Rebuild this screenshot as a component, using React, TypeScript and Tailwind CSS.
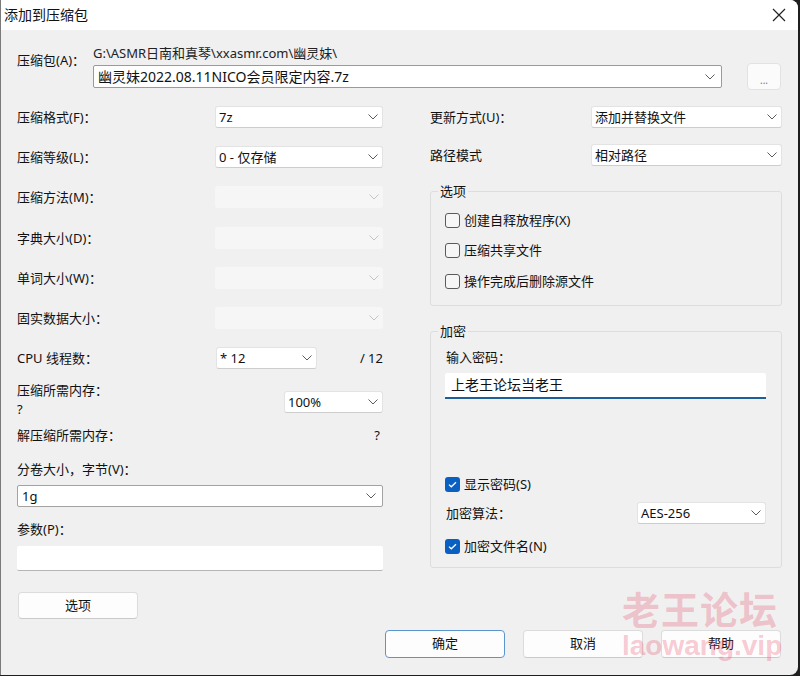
import type { ReactNode } from 'react'

const font = { fontFamily: '"Noto Sans", "Noto Sans CJK SC", sans-serif' }

function Chevron({ light }: { light?: boolean }) {
  return (
    <svg width="10" height="6" viewBox="0 0 10 6" className="shrink-0">
      <path d="M0.5 0.5L5 5L9.5 0.5" fill="none" stroke={light ? '#c4c4c4' : '#5c5c5c'} strokeWidth="1" />
    </svg>
  )
}

function Select({ value, className, disabled }: { value?: string; className: string; disabled?: boolean }) {
  if (disabled) {
    return (
      <div className={`flex h-[22px] items-center justify-end rounded-[3px] bg-[#f6f6f6] pr-[4px] ${className}`}>
        <Chevron light />
      </div>
    )
  }
  return (
    <div
      className={`flex h-[22px] items-center justify-between rounded-[3px] border border-[#e3e3e3] border-b-[#cdcdcd] bg-white pl-[3px] pr-[4px] ${className}`}
    >
      <span className="leading-[16px]">{value}</span>
      <Chevron />
    </div>
  )
}

function Check({ label, checked, className }: { label: string; checked?: boolean; className?: string }) {
  return (
    <div className={`flex h-[16px] items-center gap-[4px] ${className ?? ''}`}>
      {checked ? (
        <span className="flex h-[15px] w-[15px] items-center justify-center rounded-[3px] bg-[#0a5fc2]">
          <svg width="9" height="7" viewBox="0 0 9 7">
            <path d="M1 3.6L3.3 5.8L8 1.2" fill="none" stroke="white" strokeWidth="1.3" />
          </svg>
        </span>
      ) : (
        <span className="h-[15px] w-[15px] rounded-[3px] border border-[#5a5a5a] bg-[#f6f6f6]" />
      )}
      <span className="leading-[16px]">{label}</span>
    </div>
  )
}

function Group({ title, children, className }: { title: string; children: ReactNode; className?: string }) {
  return (
    <fieldset className={`rounded-[3px] border border-[#dddddd] px-[14px] ${className ?? ''}`}>
      <legend className="-ml-[7px] px-[2px] leading-[16px]">{title}</legend>
      {children}
    </fieldset>
  )
}

function Button({ label, primary, className }: { label: string; primary?: boolean; className?: string }) {
  return (
    <div
      className={`flex items-center justify-center rounded-[4px] border bg-[#fdfdfd] ${
        primary ? 'border-[#5b95cf]' : 'border-[#dcdcdc] border-b-[#cacaca]'
      } ${className ?? ''}`}
    >
      {label}
    </div>
  )
}

function Row({ label, children, className }: { label: string; children: ReactNode; className?: string }) {
  return (
    <div className={`flex h-[22px] items-center justify-between ${className ?? ''}`}>
      <span className="leading-[16px]">{label}</span>
      {children}
    </div>
  )
}

export default function App() {
  return (
    <div className="h-[676px] w-[800px] overflow-hidden bg-[#1e1e1e] text-[13px] text-[#111]" style={font}>
      <div className="relative h-[675px] w-[798px] overflow-hidden rounded-r-[8px] border-l border-[#7a7a7a] bg-[#f0f0f0]">
        {/* title bar */}
        <div className="flex h-[30px] items-center justify-between bg-white pl-[3px] pr-[12px]">
          <span className="text-[14px] leading-[18px]">添加到压缩包</span>
          <svg width="14" height="14" viewBox="0 0 14 14">
            <path d="M1 1L13 13M13 1L1 13" stroke="#222" strokeWidth="1.2" />
          </svg>
        </div>

        <div className="px-[16px] pt-[15px]">
          {/* archive row */}
          <div className="flex">
            <span className="w-[76px] pt-[7px] leading-[16px]">压缩包(A)：</span>
            <div className="w-[629px]">
              <div className="leading-[16px] text-[#222]">G:\ASMR日南和真琴\xxasmr.com\幽灵妹\</div>
              <div className="mt-[4px] flex h-[23px] items-center justify-between rounded-[2px] border border-[#9a9a9a] bg-white pl-[4px] pr-[6px]">
                <span className="text-[14px] leading-[18px]">幽灵妹2022.08.11NICO会员限定内容.7z</span>
                <Chevron />
              </div>
            </div>
            <div className="ml-[25px] mt-[18px] flex h-[27px] w-[34px] items-end justify-center rounded-[4px] border border-[#e2e2e2] bg-[#fbfbfb] pb-[4px] text-[10px] leading-[10px] text-[#777]">
              ...
            </div>
          </div>

          {/* columns */}
          <div className="mt-[16px] flex">
            {/* left column */}
            <div className="w-[368px]">
              <Row label="压缩格式(F)：">
                <Select value="7z" className="w-[168px]" />
              </Row>
              <Row label="压缩等级(L)：" className="mt-[18px]">
                <Select value="0 - 仅存储" className="w-[168px]" />
              </Row>
              <Row label="压缩方法(M)：" className="mt-[18px]">
                <Select disabled className="w-[168px]" />
              </Row>
              <Row label="字典大小(D)：" className="mt-[19px]">
                <Select disabled className="w-[168px]" />
              </Row>
              <Row label="单词大小(W)：" className="mt-[18px]">
                <Select disabled className="w-[168px]" />
              </Row>
              <Row label="固实数据大小：" className="mt-[18px]">
                <Select disabled className="w-[168px]" />
              </Row>
              <div className="mt-[18px] flex h-[22px] items-center">
                <span className="w-[199px] leading-[16px]">CPU 线程数：</span>
                <Select value="*  12" className="w-[101px]" />
                <span className="flex-1 text-right leading-[16px]">/ 12</span>
              </div>
              <div className="mt-[13px] flex justify-between">
                <div className="leading-[16px]">
                  <div>压缩所需内存：</div>
                  <div className="mt-[3px]">?</div>
                </div>
                <Select value="100%" className="mt-[9px] w-[99px]" />
              </div>
              <div className="mt-[10px] flex justify-between pr-[3px] leading-[16px]">
                <span>解压缩所需内存：</span>
                <span>?</span>
              </div>
              <div className="mt-[18px] leading-[16px]">分卷大小，字节(V)：</div>
              <div className="mt-[8px] flex h-[22px] items-center justify-between rounded-[2px] border border-[#a3a3a3] bg-white pl-[4px] pr-[6px]">
                <span className="leading-[16px]">1g</span>
                <Chevron />
              </div>
              <div className="mt-[14px] leading-[16px]">参数(P)：</div>
              <div className="mt-[9px] h-[25px] rounded-[2px] border-b border-[#b5b5b5] bg-white" />
              <Button label="选项" className="ml-[1px] mt-[21px] h-[27px] w-[120px]" />
            </div>

            {/* right column */}
            <div className="ml-[47px] w-[352px]">
              <div className="flex h-[22px] items-center">
                <span className="w-[161px] leading-[16px]">更新方式(U)：</span>
                <Select value="添加并替换文件" className="w-[191px]" />
              </div>
              <div className="mt-[16px] flex h-[22px] items-center">
                <span className="w-[161px] leading-[16px]">路径模式</span>
                <Select value="相对路径" className="w-[191px]" />
              </div>

              <Group title="选项" className="mt-[17px] pb-[16px]">
                <Check label="创建自释放程序(X)" className="mt-[13px]" />
                <Check label="压缩共享文件" className="mt-[14px]" />
                <Check label="操作完成后删除源文件" className="mt-[15px]" />
              </Group>

              <Group title="加密" className="mt-[17px] pb-[13px]">
                <div className="ml-[1px] mt-[10px] leading-[16px]">输入密码：</div>
                <div className="mt-[8px] flex h-[26px] w-[321px] items-center rounded-t-[2px] border-b-2 border-[#1f5f99] bg-white pl-[6px]">
                  <span className="text-[14px] leading-[18px]">上老王论坛当老王</span>
                </div>
                <Check label="显示密码(S)" checked className="mt-[77px]" />
                <div className="mt-[10px] flex h-[22px] w-[321px] items-center justify-between">
                  <span className="ml-[1px] leading-[16px]">加密算法：</span>
                  <Select value="AES-256" className="w-[129px]" />
                </div>
                <Check label="加密文件名(N)" checked className="mt-[14px]" />
              </Group>
            </div>
          </div>

          {/* footer buttons */}
          <div className="mt-[11px] flex justify-end gap-[18px] pr-[1px]">
            <Button label="确定" primary className="h-[28px] w-[120px]" />
            <Button label="取消" className="h-[28px] w-[120px]" />
            <Button label="帮助" className="h-[28px] w-[120px]" />
          </div>
        </div>

        {/* watermark */}
        <div className="pointer-events-none absolute left-[621px] top-[588px] flex flex-col items-start text-[rgba(232,80,110,0.3)]">
          <span className="text-[38px] font-bold leading-[42px] tracking-[1px]">老王论坛</span>
          <span className="-mt-[2px] text-[28px] font-bold leading-[36px]" style={{ fontFamily: '"Liberation Sans", sans-serif' }}>
            laowang.vip
          </span>
        </div>
      </div>
    </div>
  )
}
